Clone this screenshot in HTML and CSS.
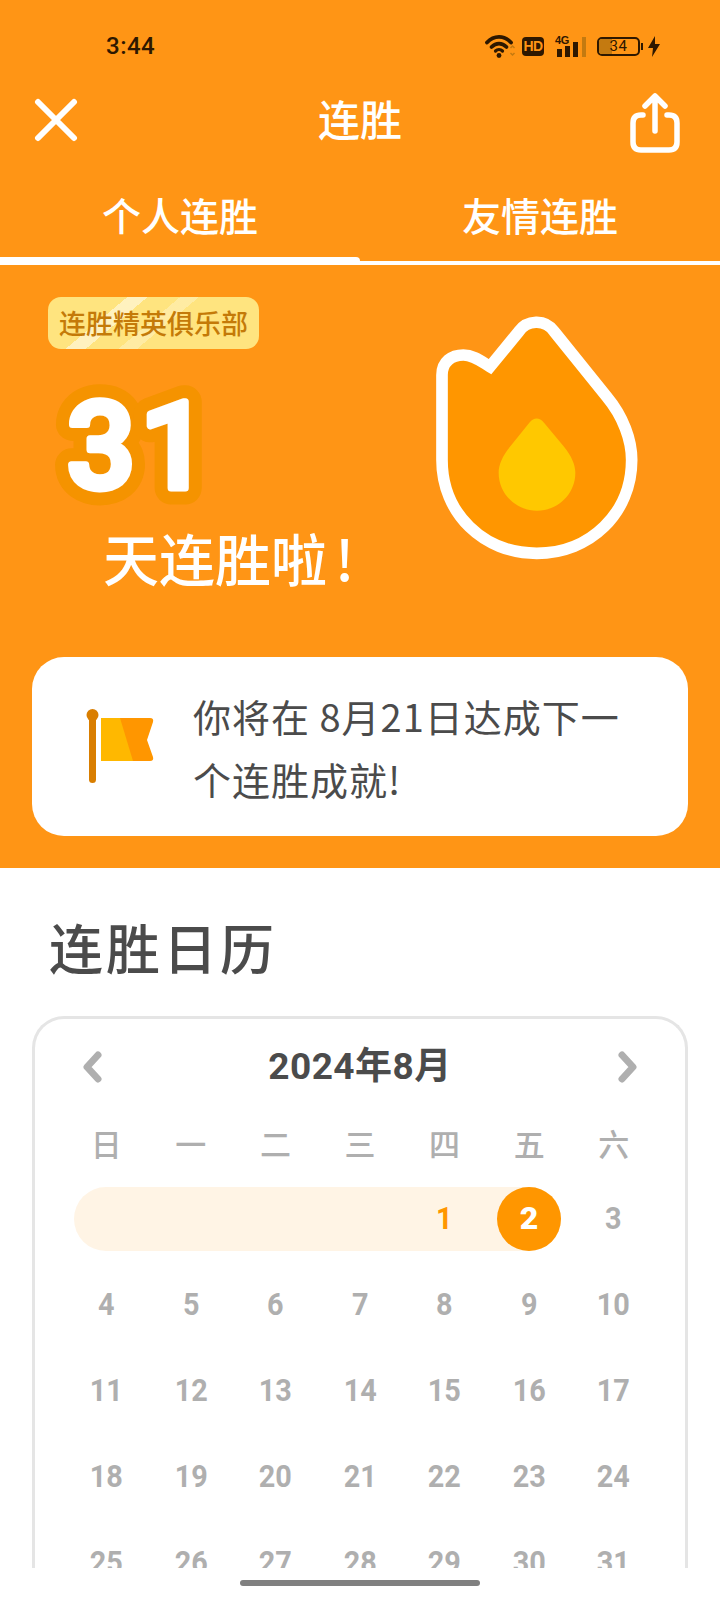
FILE: index.html
```html
<!DOCTYPE html>
<html>
<head>
    <meta charset="UTF-8">
    <title>连胜</title>
    <link rel="stylesheet" href="styles.css">
</head>
<body>
<div class="page">
    <div class="topArea">
        <div class="statusBar">
            <span class="time">3:44</span>
            <div class="statusIcons">
                <svg class="wifi" viewBox="0 0 31 24" width="31" height="24">
                    <path d="M2 8.500 C9 1 19 1 26 8.500" fill="none" stroke="#2e1800" stroke-width="3.800" stroke-linecap="round"/>
                    <path d="M6.500 13 C11 8.500 17 8.500 21.500 13" fill="none" stroke="#2e1800" stroke-width="3.800" stroke-linecap="round"/>
                    <path d="M10.500 17 C12.500 15 15.500 15 17.500 17" fill="none" stroke="#2e1800" stroke-width="3.200" stroke-linecap="round"/>
                    <circle cx="14" cy="21.500" r="2.400" fill="#2e1800"/>
                    <path d="M25.500 14 L27.500 12 L29.500 14 M25.500 19 L27.500 21 L29.500 19" fill="none" stroke="#c47a10" stroke-width="1.500"/>
                </svg>
                <span class="hd">HD</span>
                <div class="signal">
                    <span class="signalText">4G</span>
                    <svg viewBox="0 0 31 21" width="31" height="21">
                        <rect x="2" y="13" width="5" height="8" fill="#2e1800"/>
                        <rect x="10" y="10" width="5" height="11" fill="#2e1800"/>
                        <rect x="18" y="6" width="5" height="15" fill="#2e1800"/>
                        <rect x="27" y="1" width="4" height="20" fill="#c47a10"/>
                    </svg>
                </div>
                <div class="battery"><span class="batteryFill"></span><span class="batteryText">34</span></div>
                <span class="batteryTip"></span>
                <svg class="bolt" viewBox="0 0 14 21" width="14" height="21">
                    <path d="M8 0 L1 12 L6 12 L5 21 L13 8 L8 8 Z" fill="#2e1800"/>
                </svg>
            </div>
        </div>

        <div class="navBar">
            <svg class="closeIcon" viewBox="0 0 44 44" width="44" height="44">
                <path d="M4 4 L40 40 M40 4 L4 40" stroke="#fff" stroke-width="6" stroke-linecap="round"/>
            </svg>
            <span class="navTitle">连胜</span>
            <svg class="shareIcon" viewBox="0 0 50 60" width="50" height="60">
                <path d="M13 22 L11 22 Q3 22 3 30 L3 49 Q3 57 11 57 L39 57 Q47 57 47 49 L47 30 Q47 22 39 22 L37 22" fill="none" stroke="#fff" stroke-width="5.500" stroke-linecap="round"/>
                <path d="M25 38 L25 4 M15 13 L25 3 L35 13" fill="none" stroke="#fff" stroke-width="5.500" stroke-linecap="round" stroke-linejoin="round"/>
            </svg>
        </div>

        <div class="tabs">
            <div class="tab tabActive">个人连胜</div>
            <div class="tab">友情连胜</div>
        </div>

        <div class="hero">
            <div class="heroLeft">
                <div class="clubBadge">连胜精英俱乐部</div>
                <svg class="streakNum" viewBox="0 0 170 140" width="170" height="140">
                    <text class="numOutline" x="19" y="113">31</text>
                    <text class="numFill" x="19" y="113">31</text>
                </svg>
                <div class="heroText">天连胜啦<span class="bang">!</span></div>
            </div>
            <svg class="flame" viewBox="0 0 690 810" width="230" height="270">
                <path d="M66 225 C66 185 95 165 130 165 C160 165 185 185 210 200 L296 95 C320 60 375 55 403 95 L560 290 C610 350 635 420 635 480 C635 640 510 760 350 760 C190 760 66 640 66 480 Z" fill="#ff9600" stroke="#fff" stroke-width="35" stroke-linejoin="miter"/>
                <path d="M328 368 Q350 343 372 368 L432 440 C455 468 466 495 466 518 C466 582 414 632 351 632 C288 632 236 582 236 518 C236 495 247 468 270 440 Z" fill="#ffc800"/>
            </svg>
        </div>

        <div class="notice">
            <svg class="flag" viewBox="0 0 100 114" width="100" height="114">
                <rect x="19" y="20" width="7" height="73" rx="3.500" fill="#d97e00"/>
                <circle cx="22.500" cy="25" r="6" fill="#d97e00"/>
                <path d="M31 28 L80 28 Q84 28 83 32 L77 50 L83 67 Q84 71 80 71 L31 71 Z" fill="#ff9600"/>
                <path d="M31 28 L50 28 L63 71 L31 71 Z" fill="#ffb800"/>
            </svg>
            <div class="noticeText">你将在 8月21日达成下一个连胜成就!</div>
        </div>
    </div>

    <div class="calSection">
        <div class="calTitle">连胜日历</div>
        <div class="calendar">
            <div class="calHead">
                <svg viewBox="0 0 20 32" width="20" height="32"><path d="M16 4 L5 16 L16 28" fill="none" stroke="#afafaf" stroke-width="7" stroke-linecap="round" stroke-linejoin="round"/></svg>
                <span class="calMonth">2024年8月</span>
                <svg viewBox="0 0 20 32" width="20" height="32"><path d="M4 4 L15 16 L4 28" fill="none" stroke="#afafaf" stroke-width="7" stroke-linecap="round" stroke-linejoin="round"/></svg>
            </div>
            <div class="weekRow">
                <span>日</span><span>一</span><span>二</span><span>三</span><span>四</span><span>五</span><span>六</span>
            </div>
            <div class="days">
                <div class="streakBar"></div>
                <span class="day first dayDone">1</span>
                <span class="day dayToday"><b>2</b></span>
                <span class="day">3</span>
                <span class="day">4</span><span class="day">5</span><span class="day">6</span><span class="day">7</span><span class="day">8</span><span class="day">9</span><span class="day">10</span>
                <span class="day">11</span><span class="day">12</span><span class="day">13</span><span class="day">14</span><span class="day">15</span><span class="day">16</span><span class="day">17</span>
                <span class="day">18</span><span class="day">19</span><span class="day">20</span><span class="day">21</span><span class="day">22</span><span class="day">23</span><span class="day">24</span>
                <span class="day">25</span><span class="day">26</span><span class="day">27</span><span class="day">28</span><span class="day">29</span><span class="day">30</span><span class="day">31</span>
            </div>
        </div>
    </div>

    <div class="bottomBar"><span class="homeBar"></span></div>
</div>
</body>
</html>
```

FILE: styles.css
```css
* {
    box-sizing: border-box;
}

html, body {
    margin: 0;
    padding: 0;
    background-color: #fff;
}

body {
    font-family: "Noto Sans CJK SC", "Noto Sans", sans-serif;
    color: #4b4b4b;
}

.page {
    width: 720px;
    height: 1600px;
    overflow: hidden;
    display: flex;
    flex-direction: column;
}

.topArea {
    height: 868px;
    background-color: #ff9515;
    flex-shrink: 0;
}

/* status bar */
.statusBar {
    height: 92px;
    display: flex;
    align-items: center;
    justify-content: space-between;
    padding: 0 59px 0 106px;
    color: #2e1800;
}

.time {
    font-family: "Roboto", sans-serif;
    font-size: 24px;
    font-weight: 500;
    letter-spacing: 0.5px;
}

.statusIcons {
    display: flex;
    align-items: center;
}

.hd {
    width: 22px;
    height: 19px;
    margin-left: 6px;
    border-radius: 4px;
    background-color: #2e1800;
    color: #ff9515;
    font-family: "Liberation Sans", sans-serif;
    font-size: 14px;
    font-weight: bold;
    line-height: 19px;
    text-align: center;
    letter-spacing: -0.5px;
}

.signal {
    width: 31px;
    height: 21px;
    margin-left: 11px;
    position: relative;
}

.signal svg {
    display: block;
}

.signalText {
    position: absolute;
    left: 0;
    top: -1px;
    font-family: "Liberation Sans", sans-serif;
    font-size: 11px;
    font-weight: bold;
    line-height: 11px;
    letter-spacing: -0.3px;
}

.battery {
    width: 43px;
    height: 19px;
    margin-left: 11px;
    border: 2px solid #2e1800;
    border-radius: 5px;
    position: relative;
    overflow: hidden;
    display: flex;
    align-items: center;
    justify-content: center;
}

.batteryFill {
    position: absolute;
    left: 0;
    top: 0;
    bottom: 0;
    width: 34%;
    background-color: #c47a10;
}

.batteryText {
    position: relative;
    font-family: "Roboto", sans-serif;
    font-size: 15px;
    line-height: 15px;
    letter-spacing: 0.5px;
}

.batteryTip {
    width: 2px;
    height: 7px;
    margin-left: 1px;
    background-color: #2e1800;
}

.bolt {
    margin-left: 4px;
}

/* nav */
.navBar {
    height: 56px;
    padding: 0 40px 0 34px;
    display: flex;
    align-items: center;
    justify-content: space-between;
}

.navTitle {
    color: #fff;
    font-size: 42px;
    font-weight: 500;
    line-height: 56px;
    margin: 0 0 4px 12px;
}

.closeIcon {
    display: block;
}

.shareIcon {
    display: block;
    margin-top: 6px;
}

/* tabs */
.tabs {
    height: 117px;
    display: flex;
    border-bottom: 4px solid #fff;
}

.tab {
    flex: 1;
    color: #fff;
    font-size: 39px;
    font-weight: 500;
    text-align: center;
    padding-top: 38px;
    line-height: 56px;
    position: relative;
}

.tabActive::after {
    content: "";
    position: absolute;
    left: 0;
    right: 0;
    bottom: -4px;
    height: 8px;
    background-color: #fff;
    border-radius: 0 4px 0 0;
}

/* hero */
.hero {
    height: 392px;
    display: flex;
    justify-content: space-between;
    padding: 32px 70px 0 48px;
}

.clubBadge {
    width: 211px;
    height: 52px;
    border-radius: 13px;
    color: #c47a08;
    font-size: 27px;
    font-weight: 500;
    line-height: 52px;
    text-align: center;
    background-color: #ffe47f;
    background-image: linear-gradient(140deg,
        transparent 51px, rgba(255, 255, 255, 0.5) 51px, rgba(255, 255, 255, 0.5) 64px,
        transparent 64px, transparent 85px, rgba(255, 255, 255, 0.28) 85px, rgba(255, 255, 255, 0.28) 97px,
        transparent 97px);
}

.streakNum {
    display: block;
    margin-top: 26px;
    overflow: visible;
}

.streakNum text {
    font-family: "Roboto", sans-serif;
    font-size: 120px;
    font-weight: 500;
    stroke-linejoin: round;
    letter-spacing: 5px;
}

.numOutline {
    fill: #f59300;
    stroke: #f59300;
    stroke-width: 33px;
}

.numFill {
    fill: #fff;
    stroke: #fff;
    stroke-width: 7px;
}

.heroText {
    margin: 11px 0 0 55px;
    color: #fff;
    font-size: 56px;
    font-weight: 500;
    line-height: 62px;
    white-space: nowrap;
}

.bang {
    margin-left: 8px;
}

.flame {
    display: block;
    margin-top: 3px;
}

/* notice card */
.notice {
    height: 179px;
    margin: 0 32px;
    background-color: #fff;
    border-radius: 32px;
    display: flex;
    align-items: center;
    padding: 0 50px 0 38px;
}

.flag {
    flex-shrink: 0;
}

.noticeText {
    margin-left: 23px;
    font-size: 38px;
    line-height: 63px;
    letter-spacing: 1px;
    color: #4b4b4b;
}

/* calendar */
.calSection {
    flex: 1;
    padding-top: 47px;
    min-height: 0;
    display: flex;
    flex-direction: column;
}

.calTitle {
    padding-left: 49px;
    font-size: 54px;
    font-weight: 500;
    line-height: 64px;
    letter-spacing: 3px;
}

.calendar {
    margin: 37px 32px 0;
    height: 552px;
    border: 3px solid #e5e5e5;
    border-bottom: 0;
    border-radius: 32px 32px 0 0;
    overflow: hidden;
}

.calHead {
    height: 96px;
    padding: 0 47px;
    display: flex;
    align-items: center;
    justify-content: space-between;
}

.calMonth {
    font-family: "Roboto", "Noto Sans CJK SC", sans-serif;
    font-size: 37px;
    font-weight: 700;
    line-height: 50px;
    letter-spacing: 0.5px;
}

.weekRow {
    height: 58px;
    padding: 0 29px;
    display: grid;
    grid-template-columns: repeat(7, 1fr);
    color: #afafaf;
    font-size: 31px;
    font-weight: 500;
    line-height: 56px;
    text-align: center;
}

.days {
    margin-top: 14px;
    padding: 0 29px;
    display: grid;
    grid-template-columns: repeat(7, 1fr);
    grid-auto-rows: 64px;
    row-gap: 22px;
}

.streakBar {
    grid-column: 1 / 7;
    grid-row: 1;
    margin: 0 10px;
    border-radius: 32px;
    background-color: #fff4e5;
}

.day {
    color: #afafaf;
    font-family: "Roboto", sans-serif;
    font-size: 32px;
    font-weight: 700;
    line-height: 62px;
    text-align: center;
    transform: scaleX(0.9);
}

.dayDone,
.dayToday {
    grid-row: 1;
}

.first {
    grid-column: 5;
}

.dayDone {
    color: #ff9600;
}

.dayToday {
    grid-column: 6;
    transform: none;
}

.dayToday b {
    display: block;
    width: 64px;
    height: 64px;
    margin: 0 auto;
    border-radius: 50%;
    background-color: #ff9600;
    color: #fff;
}

.bottomBar {
    height: 32px;
    flex-shrink: 0;
    background-color: #fff;
    display: flex;
    justify-content: center;
    padding-top: 12px;
}

.homeBar {
    width: 240px;
    height: 6px;
    border-radius: 3px;
    background-color: #808080;
}
```
